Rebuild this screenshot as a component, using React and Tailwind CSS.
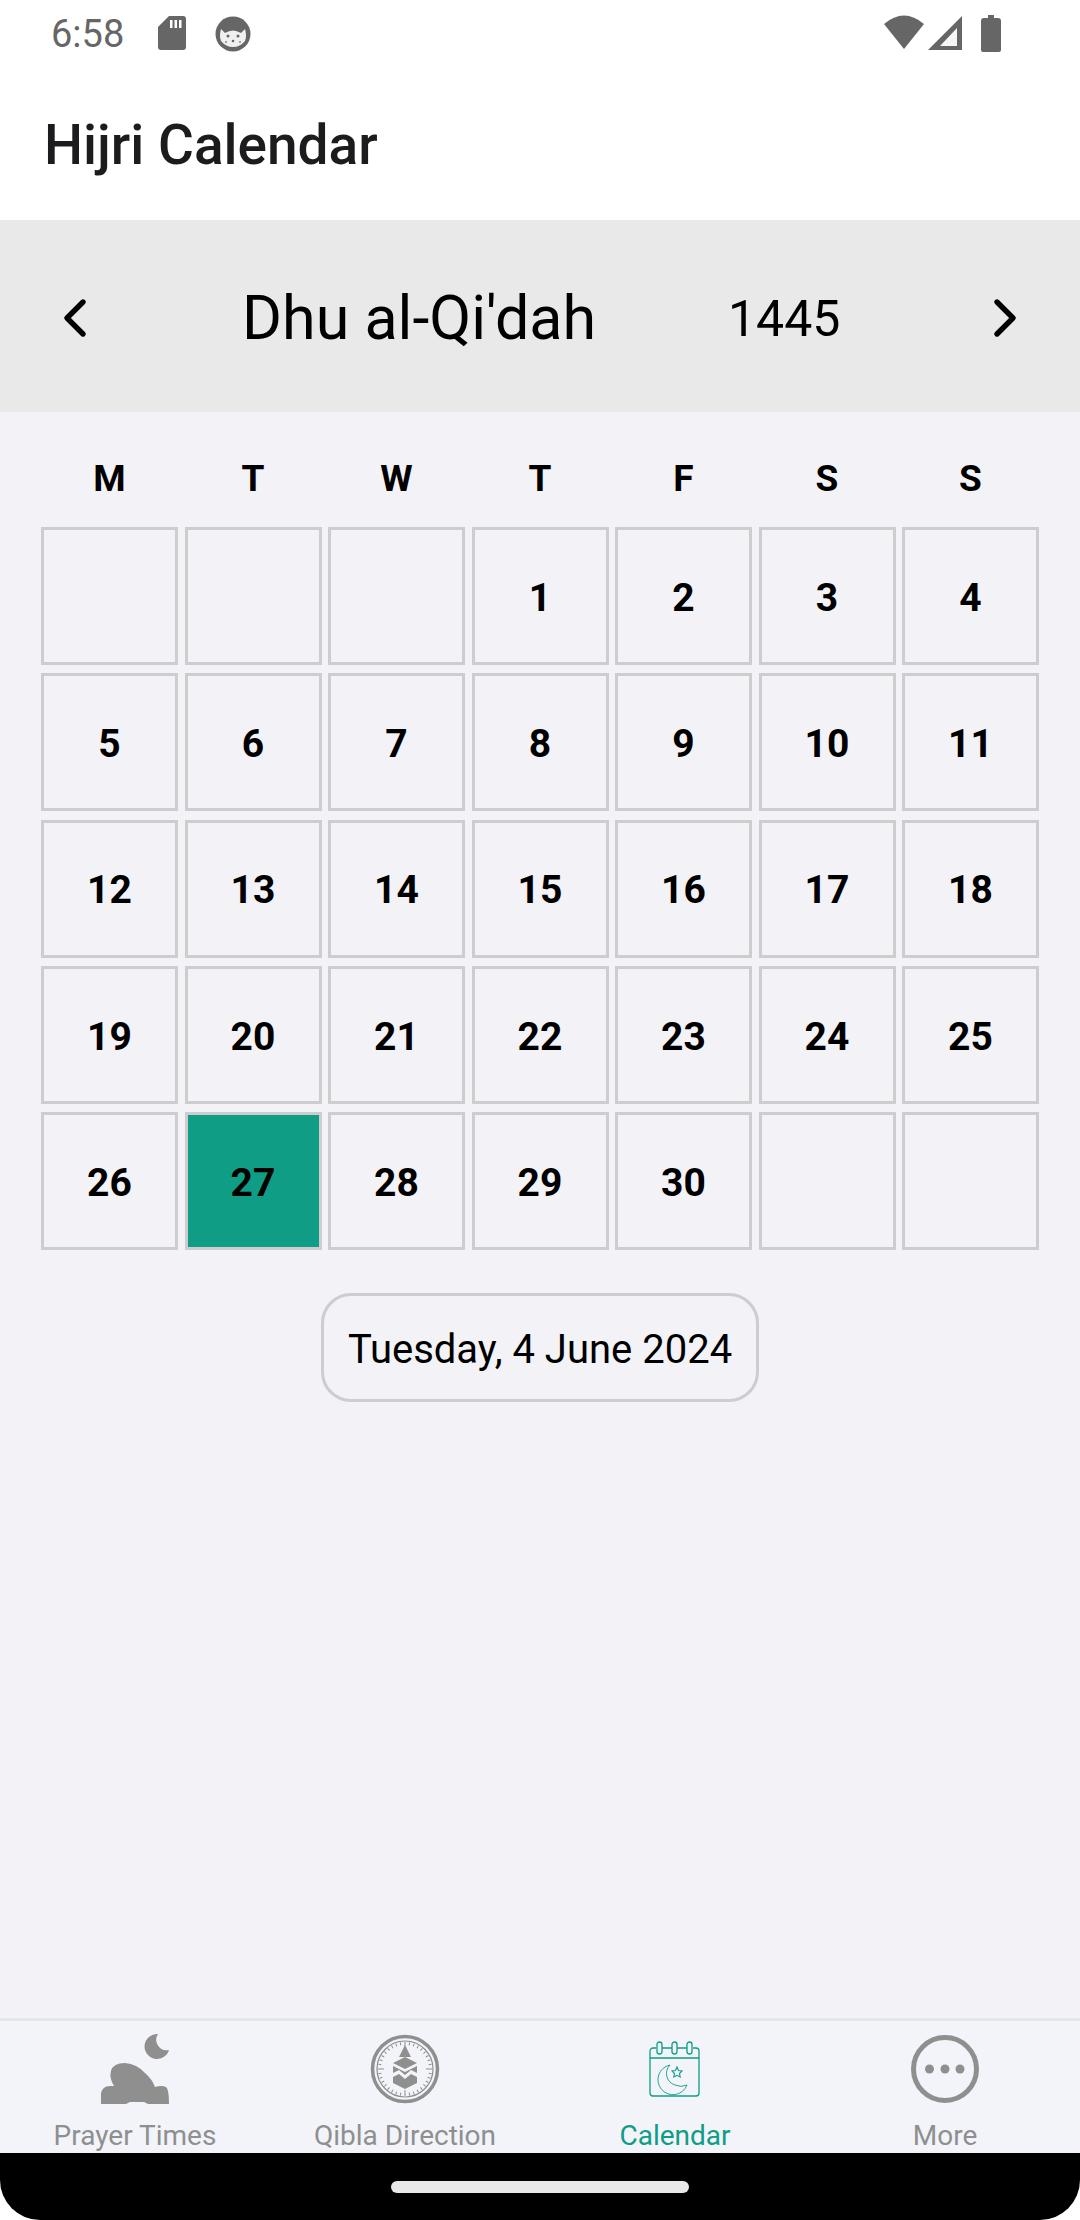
import { ChevronLeft, ChevronRight } from 'lucide-react';

const weekDays = ['M', 'T', 'W', 'T', 'F', 'S', 'S'];
const days = ['', '', '', 1, 2, 3, 4, 5, 6, 7, 8, 9, 10, 11, 12, 13, 14, 15, 16, 17, 18, 19, 20, 21, 22, 23, 24, 25, 26, 27, 28, 29, 30, '', ''];

function StatusIcons() {
  return (
    <svg width="120" height="40" viewBox="0 0 120 40" className="shrink-0">
      <path d="M0 9 Q20 -8 40 9 L20 34 Z" fill="#666" />
      <path d="M78 1 V35 H44 Z" fill="#666" />
      <path d="M73 13 V31 H56 Z" fill="#f6f6f6" />
      <path d="M104 0 h6 v3 h4 a3 3 0 0 1 3 3 v29 a2 2 0 0 1 -2 2 h-16 a2 2 0 0 1 -2 -2 v-29 a3 3 0 0 1 3 -3 h4 Z" fill="#666" />
    </svg>
  );
}

function SdIcon() {
  return (
    <svg width="28" height="34" viewBox="0 0 28 34">
      <path d="M11 0 H25 a3 3 0 0 1 3 3 V31 a3 3 0 0 1 -3 3 H3 a3 3 0 0 1 -3 -3 V11 Z" fill="#666" />
      <path d="M12 4 h2.5 v8 h-2.5 Z M16.5 4 h2.5 v8 h-2.5 Z M21 4 h2.5 v8 h-2.5 Z" fill="#fff" />
    </svg>
  );
}

function CatIcon() {
  return (
    <svg width="36" height="36" viewBox="0 0 36 36">
      <circle cx="18" cy="18" r="17.5" fill="#666" />
      <path d="M6 13 L10 17 Q18 12 26 17 L30 13 Q32 20 30 25 Q25 31 18 31 Q11 31 6 25 Q4 20 6 13 Z" fill="#f0f0f0" />
      <circle cx="13" cy="20" r="1.5" fill="#666" />
      <circle cx="23" cy="20" r="1.5" fill="#666" />
      <circle cx="18" cy="25" r="1.3" fill="#666" />
      <circle cx="11" cy="26" r="1" fill="#888" />
      <circle cx="25" cy="26" r="1" fill="#888" />
    </svg>
  );
}

function PrayerIcon() {
  return (
    <svg width="70" height="72" viewBox="0 0 70 72" fill="#8f8f8f">
      <path d="M58 1 A12.5 12.5 0 1 0 69 17 A10.5 10.5 0 0 1 58 1 Z" />
      <path d="M1 71 V61 Q2 53 10 53 L14 53 Q9 45 11 38 Q13 30 25 30 Q37 31 45 40 Q52 46 55 54 Q62 52 66 54 Q69 56 69 71 H48 L44 69 H30 L26 71 Z" />
    </svg>
  );
}

function QiblaIcon() {
  const ticks = Array.from({ length: 36 }, (_, i) => i * 10);
  return (
    <svg width="70" height="72" viewBox="0 0 70 72" fill="none" stroke="#8f8f8f">
      <circle cx="35" cy="36" r="32.5" strokeWidth="3.5" />
      <circle cx="35" cy="36" r="28" strokeWidth="1.2" />
      {ticks.map((deg) => (
        <line key={deg} x1="35" y1="9" x2="35" y2={deg % 90 === 0 ? 15 : 12} strokeWidth="1" transform={`rotate(${deg} 35 36)`} />
      ))}
      <path d="M35 12 L41 24 H29 Z" fill="#8f8f8f" stroke="none" />
      <path d="M35 24 L47 30 L35 36 L23 30 Z" fill="#8f8f8f" stroke="none" />
      <path d="M23 33 L35 39 L47 33 V40 L41 37 L35 42 L29 37 L23 40 Z" fill="#8f8f8f" stroke="none" />
      <path d="M23 44 L29 41 L35 46 L41 41 L47 44 V50 L35 56 L23 50 Z" fill="#8f8f8f" stroke="none" />
    </svg>
  );
}

function CalendarIcon() {
  return (
    <svg width="54" height="56" viewBox="0 0 54 56" fill="none" stroke="#0f9d85" strokeWidth="1.3">
      <path d="M8 7 H5 a3 3 0 0 0 -3 3 V52 a3 3 0 0 0 3 3 H48 a3 3 0 0 0 3 -3 V10 a3 3 0 0 0 -3 -3 H45 M14 7 H24 M29 7 H39" />
      <path d="M2 17 H51" />
      <rect x="9" y="1" width="5" height="12" rx="2.5" />
      <rect x="24" y="1" width="5" height="12" rx="2.5" />
      <rect x="39" y="1" width="5" height="12" rx="2.5" />
      <path d="M22 24 A15 15 0 1 0 39 44 A14 14 0 0 1 27 44 A12 12 0 0 1 22 24 Z" strokeWidth="0.9" />
      <path d="M29 26 L30.5 29.5 L34 30 L31.5 32.5 L32.2 36 L29 34.3 L25.8 36 L26.5 32.5 L24 30 L27.5 29.5 Z" strokeWidth="1.1" />
    </svg>
  );
}

function MoreIcon() {
  return (
    <svg width="70" height="72" viewBox="0 0 70 72" fill="#8f8f8f">
      <circle cx="35" cy="36" r="31.5" fill="none" stroke="#8f8f8f" strokeWidth="5" />
      <circle cx="19.5" cy="36" r="4.5" />
      <circle cx="35" cy="36" r="4.5" />
      <circle cx="50" cy="36" r="4.5" />
    </svg>
  );
}

const tabs = [
  { label: 'Prayer Times', icon: <PrayerIcon /> },
  { label: 'Qibla Direction', icon: <QiblaIcon /> },
  { label: 'Calendar', icon: <CalendarIcon />, active: true },
  { label: 'More', icon: <MoreIcon /> },
];

export default function App() {
  return (
    <div className="w-[1080px] h-[2220px] flex flex-col bg-white font-['Roboto',sans-serif] overflow-hidden">
      <div className="h-[220px] shrink-0 bg-white">
        <div className="h-[66px] pt-[15px] pl-[51px] pr-[76px] flex items-start">
          <span className="text-[38px] leading-[38px] text-[#666] w-[107px]">6:58</span>
          <div className="mt-[1px] w-[57px]"><SdIcon /></div>
          <div className="mt-[1px]"><CatIcon /></div>
          <div className="ml-auto"><StatusIcons /></div>
        </div>
        <h1 className="mt-[47px] ml-[44px] text-[55px] leading-[64px] font-medium text-[#1c1c1e]">Hijri Calendar</h1>
      </div>

      <div className="h-[192px] shrink-0 bg-[#e9e9e9] flex items-center px-[43px] text-black">
        <div className="pt-[3px]"><ChevronLeft size={64} strokeWidth={2} /></div>
        <span className="ml-[135px] w-[486px] pt-[5px] text-[61px] leading-none">Dhu al-Qi'dah</span>
        <span className="pt-[5px] text-[50px] leading-none">1445</span>
        <div className="ml-auto pt-[3px]"><ChevronRight size={64} strokeWidth={2} /></div>
      </div>

      <main className="flex-1 bg-[#f2f2f7] px-[41px] flex flex-col items-center">
        <div className="w-full grid grid-cols-7 gap-x-[6.5px] pt-[46px] h-[115px]">
          {weekDays.map((d, i) => (
            <div key={i} className="text-center text-[37px] leading-[42px] font-bold text-black">{d}</div>
          ))}
        </div>
        <div className="w-full grid grid-cols-7 gap-x-[6.5px] gap-y-[8.3px]">
          {days.map((d, i) => (
            <div
              key={i}
              className={`h-[138px] pt-[4px] border-[3px] border-[#cdcdd0] flex items-center justify-center text-[39px] font-bold text-black ${d === 27 ? 'bg-[#0f9d85]' : ''}`}
            >
              {d}
            </div>
          ))}
        </div>
        <div className="mt-[43px] w-[438px] h-[109px] pt-[5px] border-[3px] border-[#cdcdd0] rounded-[30px] flex items-center justify-center text-[40px] text-black">
          Tuesday, 4 June 2024
        </div>
      </main>

      <nav className="h-[135px] shrink-0 bg-[#f3f4f9] border-t-[3px] border-[#e6e6ea] grid grid-cols-4">
        {tabs.map((t) => (
          <div key={t.label} className="flex flex-col items-center">
            <div className="h-[72px] mt-[12px] flex items-center justify-center">{t.icon}</div>
            <span className={`mt-[15px] text-[28px] leading-[32px] ${t.active ? 'text-[#0f9d85]' : 'text-[#8f8f8f]'}`}>{t.label}</span>
          </div>
        ))}
      </nav>
      <div className="h-[67px] shrink-0 bg-black rounded-b-[40px] flex justify-center pt-[28px]">
        <div className="w-[298px] h-[12px] rounded-full bg-[#e8e8e8]" />
      </div>
    </div>
  );
}
